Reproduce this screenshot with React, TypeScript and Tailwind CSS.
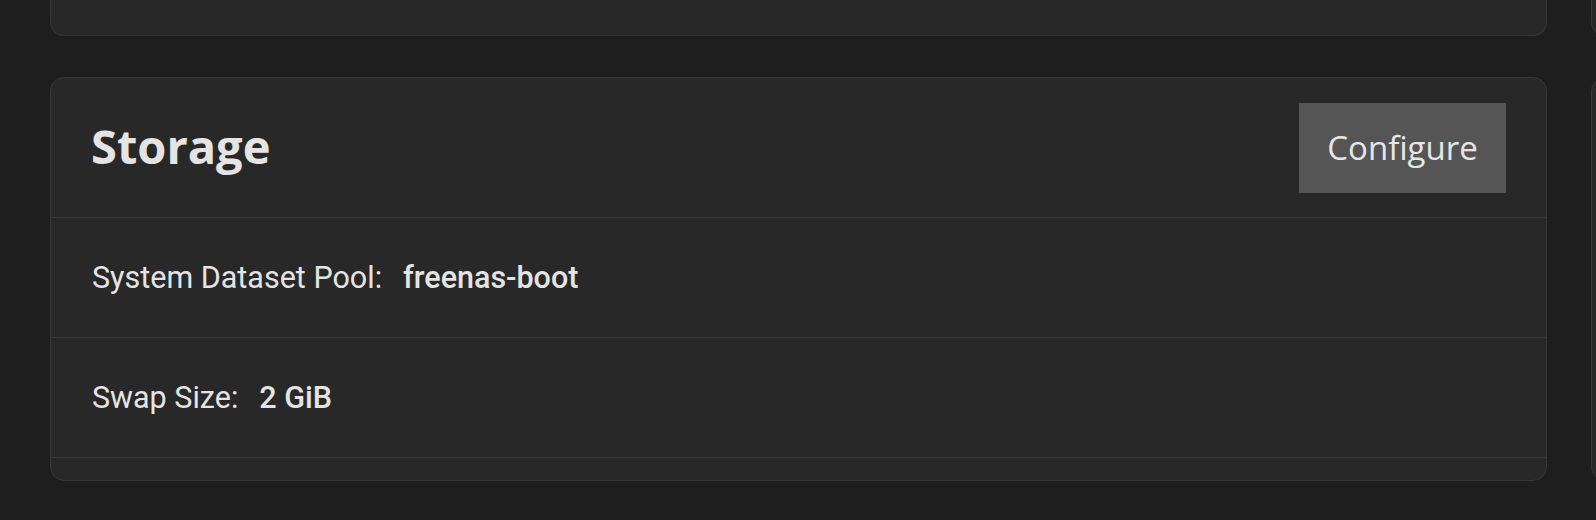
import React from "react";

function Column({ children }: { children?: React.ReactNode }) {
  return (
    <div className="flex w-[1497px] shrink-0 flex-col">
      <div className="h-[36px] rounded-b-[14px] border-x border-b border-[#373737] bg-[#282828]" />
      <div className="mt-[41px] flex h-[404px] flex-col rounded-[14px] border border-[#373737] bg-[#282828]">
        {children}
      </div>
    </div>
  );
}

function Row({ label, value }: { label: string; value: string }) {
  return (
    <div
      className="flex h-[120px] items-center border-b border-[#373737] pl-[41px] text-[30.5px] text-[#e4e4e4]"
      style={{ fontFamily: "Roboto, 'Liberation Sans', sans-serif" }}
    >
      <span className="font-normal">{label}</span>
      <span className="ml-[21px] font-medium">{value}</span>
    </div>
  );
}

export default function App() {
  return (
    <div className="flex h-[520px] w-[1596px] gap-[44px] overflow-hidden bg-[#1e1e1e] pl-[50px]">
      <Column>
        <div className="flex h-[140px] shrink-0 items-center justify-between border-b border-[#373737] pl-[40px] pr-[40px]">
          <h1
            className="mt-[-2px] text-[47px] font-bold leading-none text-[#e4e4e4]"
            style={{ fontFamily: "'Open Sans', 'Noto Sans', sans-serif" }}
          >
            Storage
          </h1>
          <button
            className="mt-0 flex h-[90px] w-[207px] items-center justify-center bg-[#555555] text-[33px] text-[#e6e6e6]"
            style={{ fontFamily: "'Open Sans', 'Noto Sans', sans-serif" }}
          >
            Configure
          </button>
        </div>
        <Row label="System Dataset Pool:" value="freenas-boot" />
        <Row label="Swap Size:" value="2 GiB" />
      </Column>
      <Column />
    </div>
  );
}
